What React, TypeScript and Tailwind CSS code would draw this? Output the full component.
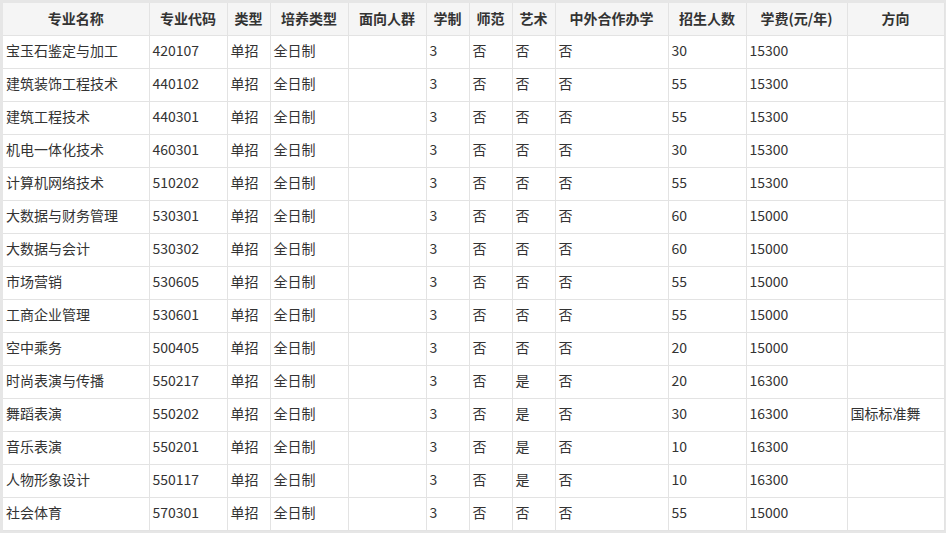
const headers = [
  '专业名称',
  '专业代码',
  '类型',
  '培养类型',
  '面向人群',
  '学制',
  '师范',
  '艺术',
  '中外合作办学',
  '招生人数',
  '学费(元/年)',
  '方向',
];

const widths = [146, 78, 43, 78, 78, 43, 43, 43, 113, 78, 101, 97];

const rows = [
  ['宝玉石鉴定与加工', '420107', '否', '30', '15300', ''],
  ['建筑装饰工程技术', '440102', '否', '55', '15300', ''],
  ['建筑工程技术', '440301', '否', '55', '15300', ''],
  ['机电一体化技术', '460301', '否', '30', '15300', ''],
  ['计算机网络技术', '510202', '否', '55', '15300', ''],
  ['大数据与财务管理', '530301', '否', '60', '15000', ''],
  ['大数据与会计', '530302', '否', '60', '15000', ''],
  ['市场营销', '530605', '否', '55', '15000', ''],
  ['工商企业管理', '530601', '否', '55', '15000', ''],
  ['空中乘务', '500405', '否', '20', '15000', ''],
  ['时尚表演与传播', '550217', '是', '20', '16300', ''],
  ['舞蹈表演', '550202', '是', '30', '16300', '国标标准舞'],
  ['音乐表演', '550201', '是', '10', '16300', ''],
  ['人物形象设计', '550117', '是', '10', '16300', ''],
  ['社会体育', '570301', '否', '55', '15000', ''],
];

export default function App() {
  return (
    <div
      className="w-[946px] h-[533px] bg-[#e6e6e6] pt-[3px] pl-[3px] text-[14px] text-[#333]"
      style={{ fontFamily: '"Noto Sans CJK SC", "Noto Sans", sans-serif' }}
    >
      <table className="table-fixed border-collapse bg-white w-[941px]">
        <colgroup>
          {widths.map((w, i) => (
            <col key={i} style={{ width: w }} />
          ))}
        </colgroup>
        <thead>
          <tr className="h-[32px] bg-[#f5f5f5]">
            {headers.map((h) => (
              <th
                key={h}
                className="border border-[#e3e3e3] border-t-0 border-l-0 font-bold text-center p-0 pb-[2px] leading-none"
              >
                {h}
              </th>
            ))}
          </tr>
        </thead>
        <tbody>
          {rows.map((r, i) => {
            const cells = [r[0], r[1], '单招', '全日制', '', '3', '否', r[2], '否', r[3], r[4], r[5]];
            return (
              <tr key={i} className="h-[33px]">
                {cells.map((c, j) => (
                  <td
                    key={j}
                    className="border border-[#e3e3e3] border-l-0 px-[3px] pt-0 pb-[3px] leading-none whitespace-nowrap overflow-hidden"
                  >
                    {c}
                  </td>
                ))}
              </tr>
            );
          })}
        </tbody>
      </table>
    </div>
  );
}
